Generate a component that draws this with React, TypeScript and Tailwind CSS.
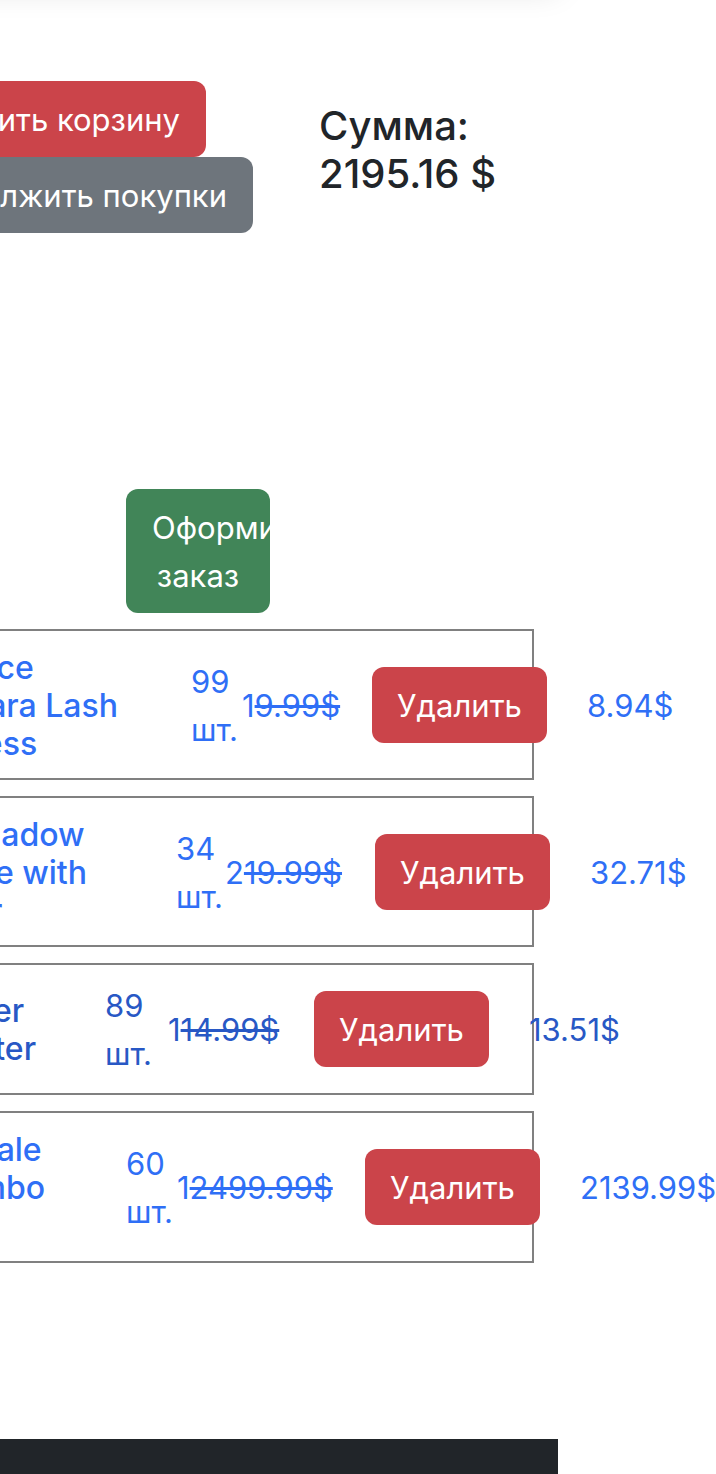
type Item = {
  name: string[];
  stock: string;
  count: number;
  oldPrice: string;
  total: string;
  row: string;
  link: string;
  nameCol: string;
  stockCol: string;
  priceCol: string;
};

const items: Item[] = [
  {
    name: ["Essence", "Mascara Lash", "Princess"],
    stock: "99",
    count: 1,
    oldPrice: "9.99$",
    total: "8.94$",
    row: "h-[151px]",
    link: "text-[#2f6ff6]",
    nameCol: "w-[191px] pr-[73px]",
    stockCol: "w-[51px]",
    priceCol: "w-[130px]",
  },
  {
    name: ["Eyeshadow", "Palette with", "Mirror"],
    stock: "34",
    count: 2,
    oldPrice: "19.99$",
    total: "32.71$",
    row: "h-[151px]",
    link: "text-[#2f6ff6]",
    nameCol: "w-[176px] pr-[89px]",
    stockCol: "w-[49px]",
    priceCol: "w-[150px]",
  },
  {
    name: ["Powder", "Canister"],
    stock: "89",
    count: 1,
    oldPrice: "14.99$",
    total: "13.51$",
    row: "h-[132px]",
    link: "text-[#2858c5]",
    nameCol: "w-[105px] pr-[69px]",
    stockCol: "w-[63px]",
    priceCol: "w-[146px]",
  },
  {
    name: ["Annibale", "Colombo", "Bed"],
    stock: "60",
    count: 1,
    oldPrice: "2499.99$",
    total: "2139.99$",
    row: "h-[152px]",
    link: "text-[#2f6ff6]",
    nameCol: "w-[126px] pr-[81px]",
    stockCol: "w-[51px]",
    priceCol: "w-[188px]",
  },
];

function CartRow({ item }: { item: Item }) {
  return (
    <li className={`flex items-center border-y-2 border-r-2 border-[#808080] ${item.row} ${item.link}`}>
      <a href="#product" className={`flex shrink-0 justify-end pt-0.5 text-[32px] leading-[38px] font-medium ${item.nameCol}`}>
        <h2 className="shrink-0">
          {item.name.map((line) => (
            <span key={line} className="block whitespace-nowrap">
              {line}
            </span>
          ))}
        </h2>
      </a>
      <span className={`shrink-0 pt-0.5 ${item.stockCol}`}>
        {item.stock}
        <br />
        шт.
      </span>
      <span className={`shrink-0 pt-0.5 whitespace-nowrap ${item.priceCol}`}>
        {item.count}
        <s>{item.oldPrice}</s>
      </span>
      <button className="w-[175px] shrink-0 rounded-xl bg-[#cb444a] pt-[15px] pb-[13px] text-center text-white">
        Удалить
      </button>
      <span className="ml-10 shrink-0 pt-0.5">{item.total}</span>
    </li>
  );
}

export default function App() {
  return (
    <div className="overflow-hidden bg-white font-[Inter,'Liberation_Sans',sans-serif] text-[31px] leading-[48px] text-[#212529]">
      <div className="mr-[158px]">
        <header className="-mt-[108px] -ml-20 h-20 bg-white shadow-[0_16px_32px_rgba(0,0,0,0.15)]" />
        <section className="flex h-[408px] items-start pt-[109px]">
          <div className="flex w-[319px] shrink-0 flex-col items-start">
            <button className="flex w-[206px] justify-end rounded-r-xl bg-[#cb444a] pt-[15px] pr-[26px] pb-[13px] whitespace-nowrap text-white">
              ить корзину
            </button>
            <button className="flex w-[253px] justify-end rounded-r-xl bg-[#6e757c] pt-[15px] pr-[26px] pb-[13px] whitespace-nowrap text-white">
              олжить покупки
            </button>
          </div>
          <h1 className="pt-[21px] text-[40px] leading-[48px] font-medium whitespace-nowrap">
            Сумма:
            <br />
            2195.16 $
          </h1>
        </section>
        <button className="mt-[109px] ml-[126px] block w-36 overflow-hidden rounded-xl bg-[#418558] px-[26px] pt-[15px] pb-[13px] text-center text-white">
          Оформить заказ
        </button>
        <ul className="mt-4 mr-6 flex flex-col gap-4">
          {items.map((item) => (
            <CartRow key={item.stock} item={item} />
          ))}
        </ul>
        <footer className="mt-44 h-[35px] bg-[#212529]" />
      </div>
    </div>
  );
}
